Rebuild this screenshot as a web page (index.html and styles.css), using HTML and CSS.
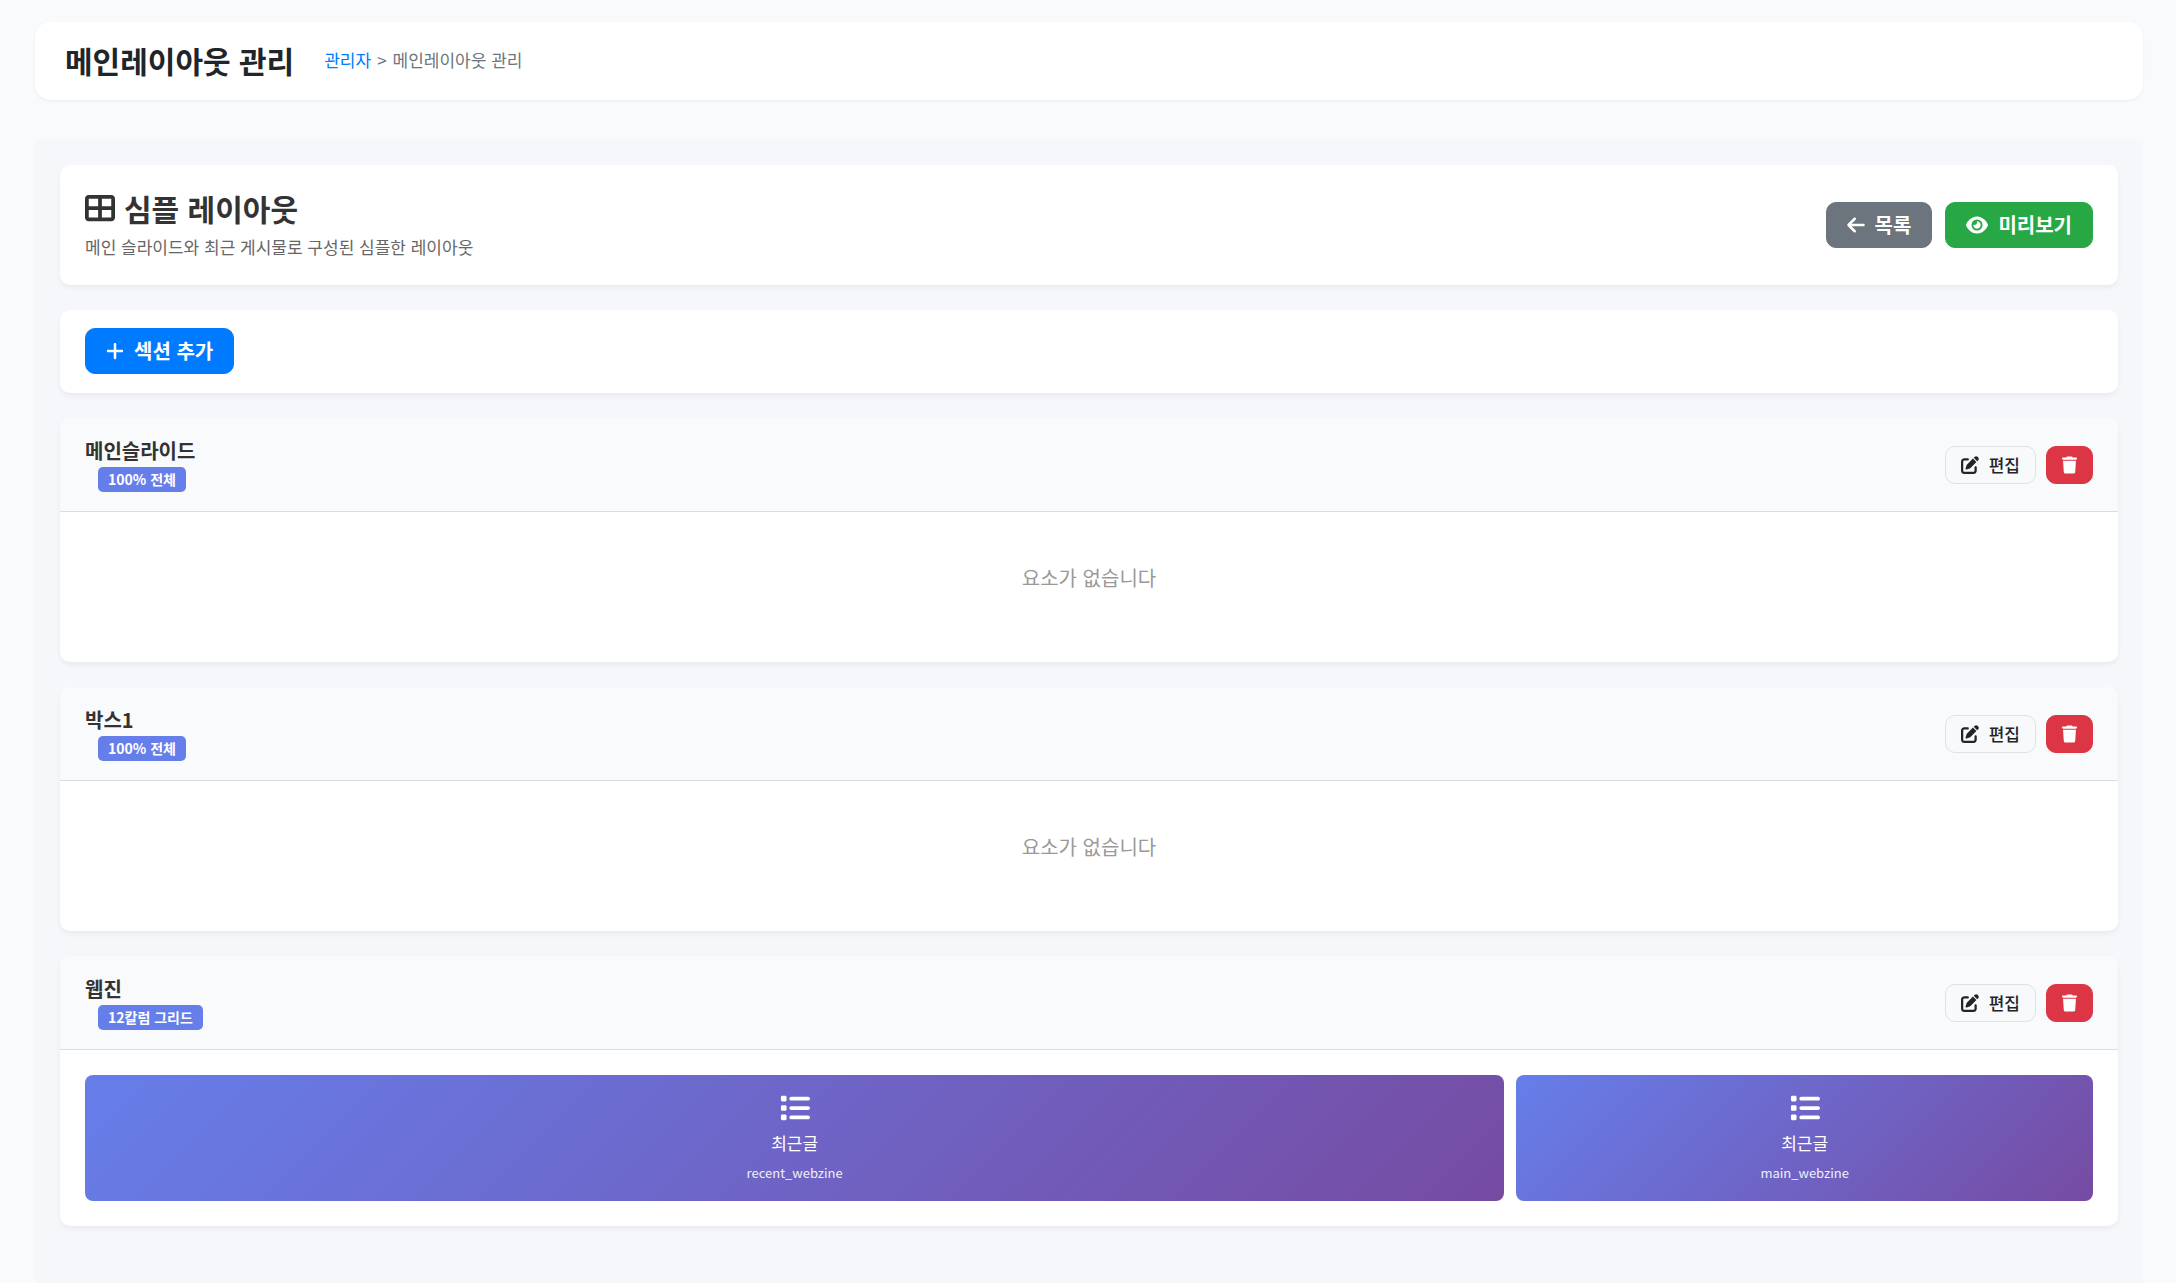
FILE: index.html
```html
<!DOCTYPE html>
<html lang="ko">
<head>
<meta charset="utf-8">
<meta name="viewport" content="width=device-width, initial-scale=1">
<title>메인레이아웃 관리</title>
<link rel="stylesheet" href="styles.css">
</head>
<body>
<svg class="sprite" aria-hidden="true">
  <symbol id="i-layout" viewBox="0 0 512 512"><path d="M448 96V224H288V96H448zm0 192V416H288V288H448zM224 224H64V96H224V224zM64 288H224V416H64V288zM64 32C28.7 32 0 60.7 0 96V416c0 35.3 28.7 64 64 64H448c35.3 0 64-28.7 64-64V96c0-35.3-28.7-64-64-64H64z"/></symbol>
  <symbol id="i-back" viewBox="0 0 448 512"><path d="M9.4 233.4c-12.5 12.5-12.5 32.8 0 45.3l160 160c12.5 12.5 32.8 12.5 45.3 0s12.5-32.8 0-45.3L109.2 288 416 288c17.7 0 32-14.3 32-32s-14.3-32-32-32l-306.7 0L214.6 118.6c12.5-12.5 12.5-32.8 0-45.3s-32.8-12.5-45.3 0l-160 160z"/></symbol>
  <symbol id="i-eye" viewBox="0 0 576 512"><path d="M288 32c-80.8 0-145.5 36.8-192.6 80.6C48.6 156 17.3 208 2.5 243.7c-3.3 7.9-3.3 16.7 0 24.6C17.3 304 48.6 356 95.4 399.4C142.5 443.2 207.2 480 288 480s145.5-36.8 192.6-80.6c46.8-43.5 78.1-95.4 93-131.1c3.3-7.9 3.3-16.7 0-24.6c-14.9-35.7-46.2-87.7-93-131.1C433.5 68.8 368.8 32 288 32zM144 256a144 144 0 1 1 288 0 144 144 0 1 1 -288 0zm144-64c0 35.3-28.7 64-64 64c-7.1 0-13.9-1.2-20.3-3.3c-5.5-1.8-11.9 1.6-11.7 7.4c.3 6.9 1.3 13.8 3.2 20.7c13.7 51.2 66.4 81.6 117.6 67.9s81.6-66.4 67.9-117.6c-11.1-41.5-47.8-69.4-88.6-71.1c-5.8-.2-9.2 6.1-7.4 11.7c2.1 6.4 3.3 13.2 3.3 20.3z"/></symbol>
  <symbol id="i-plus" viewBox="0 0 448 512"><path d="M256 80c0-17.7-14.3-32-32-32s-32 14.3-32 32V224H48c-17.7 0-32 14.3-32 32s14.3 32 32 32H192V432c0 17.7 14.3 32 32 32s32-14.3 32-32V288H400c17.7 0 32-14.3 32-32s-14.3-32-32-32H256V80z"/></symbol>
  <symbol id="i-edit" viewBox="0 0 512 512"><path d="M471.6 21.7c-21.9-21.9-57.3-21.9-79.2 0L362.3 51.7l97.9 97.9 30.1-30.1c21.9-21.9 21.9-57.3 0-79.2L471.6 21.7zm-299.2 220c-6.1 6.1-10.8 13.6-13.5 21.9l-29.6 88.8c-2.9 8.6-.6 18.1 5.8 24.6s15.9 8.7 24.6 5.8l88.8-29.6c8.2-2.7 15.7-7.4 21.9-13.5L437.7 172.3 339.7 74.3 172.4 241.7zM96 64C43 64 0 107 0 160V416c0 53 43 96 96 96H352c53 0 96-43 96-96V320c0-17.7-14.3-32-32-32s-32 14.3-32 32v96c0 17.7-14.3 32-32 32H96c-17.7 0-32-14.3-32-32V160c0-17.7 14.3-32 32-32h96c17.7 0 32-14.3 32-32s-14.3-32-32-32H96z"/></symbol>
  <symbol id="i-trash" viewBox="0 0 448 512"><path d="M135.2 17.7L128 32H32C14.3 32 0 46.3 0 64S14.3 96 32 96H416c17.7 0 32-14.3 32-32s-14.3-32-32-32H320l-7.2-14.3C307.4 6.8 296.3 0 284.2 0H163.8c-12.1 0-23.2 6.8-28.6 17.7zM416 128H32L53.2 467c1.6 25.3 22.6 45 47.9 45H346.9c25.3 0 46.3-19.7 47.9-45L416 128z"/></symbol>
  <symbol id="i-list" viewBox="0 0 512 512"><path d="M40 48C26.7 48 16 58.7 16 72v48c0 13.3 10.7 24 24 24H88c13.3 0 24-10.7 24-24V72c0-13.3-10.7-24-24-24H40zM192 64c-17.7 0-32 14.3-32 32s14.3 32 32 32H480c17.7 0 32-14.3 32-32s-14.3-32-32-32H192zm0 160c-17.7 0-32 14.3-32 32s14.3 32 32 32H480c17.7 0 32-14.3 32-32s-14.3-32-32-32H192zm0 160c-17.7 0-32 14.3-32 32s14.3 32 32 32H480c17.7 0 32-14.3 32-32s-14.3-32-32-32H192zM16 232v48c0 13.3 10.7 24 24 24H88c13.3 0 24-10.7 24-24V232c0-13.3-10.7-24-24-24H40c-13.3 0-24 10.7-24 24zM40 368c-13.3 0-24 10.7-24 24v48c0 13.3 10.7 24 24 24H88c13.3 0 24-10.7 24-24V392c0-13.3-10.7-24-24-24H40z"/></symbol>
</svg>

<header class="page-header">
  <h1 class="page-title">메인레이아웃 관리</h1>
  <nav class="breadcrumb"><a href="#">관리자</a><span>&gt;</span><span>메인레이아웃 관리</span></nav>
</header>

<main class="panel">
  <section class="card intro">
    <div>
      <h2 class="intro-title"><svg class="icon icon-lg"><use href="#i-layout"/></svg>심플 레이아웃</h2>
      <p class="intro-text">메인 슬라이드와 최근 게시물로 구성된 심플한 레이아웃</p>
    </div>
    <div class="intro-actions">
      <button class="btn btn-gray" type="button"><svg class="icon icon-narrow"><use href="#i-back"/></svg>목록</button>
      <button class="btn btn-green" type="button"><svg class="icon icon-wide"><use href="#i-eye"/></svg>미리보기</button>
    </div>
  </section>

  <div class="card toolbar">
    <button class="btn btn-blue" type="button"><svg class="icon icon-narrow"><use href="#i-plus"/></svg>섹션 추가</button>
  </div>

  <section class="card">
    <header class="section-header">
      <div>
        <h3 class="section-title">메인슬라이드</h3>
        <span class="badge">100% 전체</span>
      </div>
      <div class="section-actions">
        <button class="btn btn-sm btn-light" type="button"><svg class="icon icon-sm"><use href="#i-edit"/></svg>편집</button>
        <button class="btn btn-sm btn-red" type="button" aria-label="삭제"><svg class="icon icon-trash"><use href="#i-trash"/></svg></button>
      </div>
    </header>
    <div class="section-body"><p class="empty">요소가 없습니다</p></div>
  </section>

  <section class="card">
    <header class="section-header">
      <div>
        <h3 class="section-title">박스1</h3>
        <span class="badge">100% 전체</span>
      </div>
      <div class="section-actions">
        <button class="btn btn-sm btn-light" type="button"><svg class="icon icon-sm"><use href="#i-edit"/></svg>편집</button>
        <button class="btn btn-sm btn-red" type="button" aria-label="삭제"><svg class="icon icon-trash"><use href="#i-trash"/></svg></button>
      </div>
    </header>
    <div class="section-body"><p class="empty">요소가 없습니다</p></div>
  </section>

  <section class="card">
    <header class="section-header">
      <div>
        <h3 class="section-title">웹진</h3>
        <span class="badge">12칼럼 그리드</span>
      </div>
      <div class="section-actions">
        <button class="btn btn-sm btn-light" type="button"><svg class="icon icon-sm"><use href="#i-edit"/></svg>편집</button>
        <button class="btn btn-sm btn-red" type="button" aria-label="삭제"><svg class="icon icon-trash"><use href="#i-trash"/></svg></button>
      </div>
    </header>
    <div class="section-body tiles">
      <div class="tile">
        <svg class="icon icon-lg"><use href="#i-list"/></svg>
        <div class="tile-name">최근글</div>
        <div class="tile-id">recent_webzine</div>
      </div>
      <div class="tile">
        <svg class="icon icon-lg"><use href="#i-list"/></svg>
        <div class="tile-name">최근글</div>
        <div class="tile-id">main_webzine</div>
      </div>
    </div>
  </section>
</main>
</body>
</html>
```
FILE: styles.css
```css
* { box-sizing: border-box; }

body {
  margin: 0;
  min-height: 100vh;
  padding: 22px 33px 0 35px;
  display: flex;
  flex-direction: column;
  gap: 40px;
  background: #f8fafc;
  color: #212529;
  font-family: "Noto Sans CJK KR", "Noto Sans", sans-serif;
  font-size: 17px;
  line-height: 26px;
}

h1, h2, h3, p { margin: 0; }

.sprite { display: none; }

.icon {
  display: block;
  flex: none;
  width: 20px;
  height: 20px;
  fill: currentColor;
}
.icon-lg { width: 30px; height: 30px; }
.icon-wide { width: 22px; }
.icon-narrow { width: 18px; }
.icon-sm { width: 18px; height: 18px; }
.icon-trash { width: 15px; height: 18px; }

.page-header {
  display: flex;
  align-items: center;
  gap: 30px;
  padding: 19px 30px 21px;
  background: #fff;
  border-radius: 15px;
  box-shadow: 0 1px 3px rgba(0, 0, 0, .06);
}
.page-title { font-size: 30px; line-height: 38px; font-weight: 700; }
.breadcrumb { display: flex; gap: 6px; color: #6c757d; }
.breadcrumb a { color: #007bff; text-decoration: none; }

.panel {
  flex: 1;
  display: flex;
  flex-direction: column;
  gap: 25px;
  padding: 25px 25px 57px;
  background: #f5f7fb;
}

.card {
  background: #fff;
  border-radius: 10px;
  box-shadow: 0 3px 5px rgba(0, 0, 0, .05);
}

.intro {
  display: flex;
  justify-content: space-between;
  align-items: center;
  padding: 25px;
}
.intro-title {
  display: flex;
  align-items: center;
  gap: 9px;
  margin-bottom: 8px;
  font-size: 30px;
  line-height: 36px;
  color: #333;
}
.intro-text { color: #666; }
.intro-actions { display: flex; gap: 13px; }

.toolbar { display: flex; padding: 18px 25px 19px; }

.btn {
  display: inline-flex;
  align-items: center;
  justify-content: center;
  gap: 10px;
  padding: 7px 20px;
  border: 1px solid transparent;
  border-radius: 10px;
  font-family: inherit;
  font-size: 20px;
  line-height: 30px;
  font-weight: 600;
  color: #fff;
  cursor: pointer;
}
.btn-gray { background: #6c757d; border-color: #6c757d; }
.btn-green { background: #28a745; border-color: #28a745; }
.btn-blue { background: #007bff; border-color: #007bff; }
.btn-sm {
  min-height: 38px;
  padding: 5px 15px;
  font-size: 17px;
  line-height: 26px;
  font-weight: 500;
}
.btn-light { background: #f8f9fa; border-color: #dee2e6; color: #212529; }
.btn-red { background: #dc3545; border-color: #dc3545; }

.section-header {
  display: flex;
  justify-content: space-between;
  align-items: center;
  padding: 19px 25px;
  background: #f8fafc;
  border-bottom: 1px solid #ddd;
  border-radius: 10px 10px 0 0;
}
.section-title {
  margin-bottom: 2px;
  font-size: 20px;
  line-height: 28px;
  color: #333;
}
.section-actions { display: flex; gap: 10px; }

.badge {
  display: block;
  width: fit-content;
  margin-left: 13px;
  padding: 0 10px;
  border-radius: 5px;
  background: #667eea;
  color: #fff;
  font-size: 14px;
  line-height: 25px;
  font-weight: 700;
}

.section-body { padding: 25px; }
.empty {
  min-height: 100px;
  padding: 26px;
  font-size: 20px;
  line-height: 30px;
  text-align: center;
  color: #999;
}

.tiles {
  display: grid;
  grid-template-columns: 64fr 26fr;
  gap: 12px;
}
.tile {
  display: flex;
  flex-direction: column;
  align-items: center;
  gap: 7px;
  padding: 18px;
  border-radius: 8px;
  background: linear-gradient(135deg, #667eea 0%, #764ba2 100%);
  color: #fff;
}
.tile-id { font-size: 13px; line-height: 20px; opacity: .9; }
```
